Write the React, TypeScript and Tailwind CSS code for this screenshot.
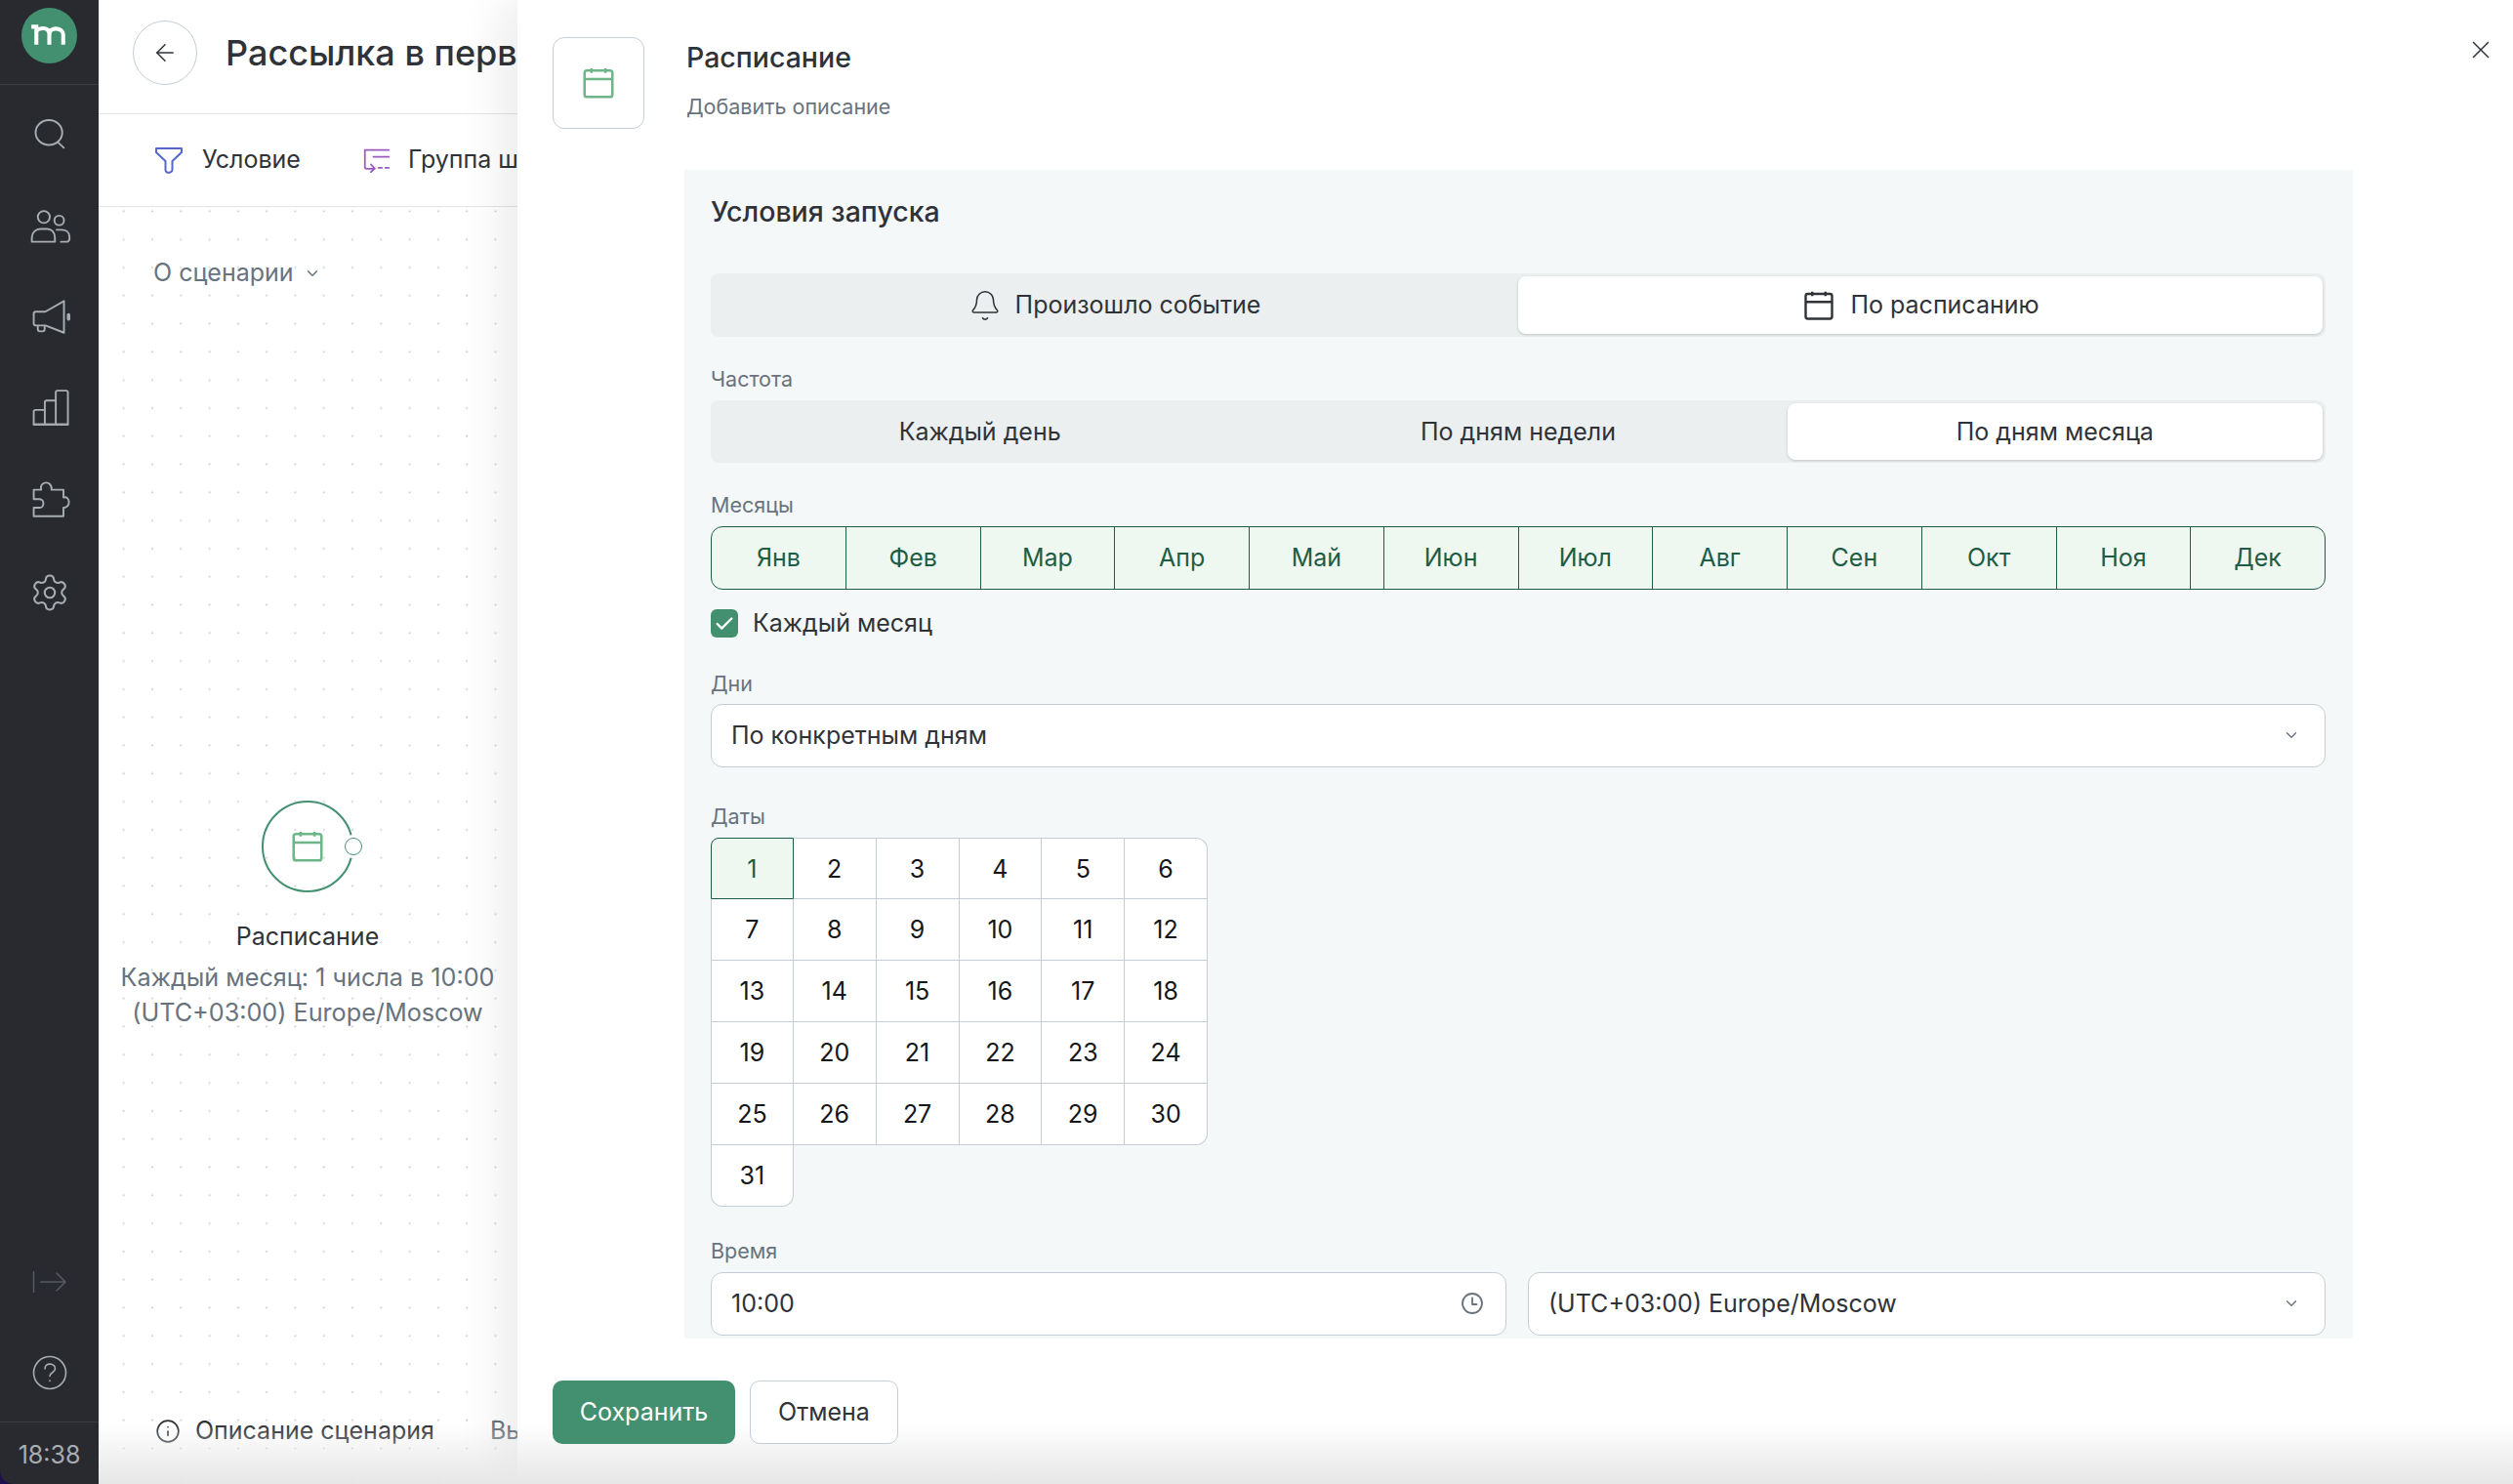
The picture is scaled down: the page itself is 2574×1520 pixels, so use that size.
import { ArrowLeft, Bell, ChevronDown, Check, Info, Settings, X } from 'lucide-react';

const months = ['Янв', 'Фев', 'Мар', 'Апр', 'Май', 'Июн', 'Июл', 'Авг', 'Сен', 'Окт', 'Ноя', 'Дек'];
const dates = Array.from({ length: 31 }, (_, i) => i + 1);

function CalendarIcon({ className }: { className?: string }) {
  return (
    <svg viewBox="0 0 24 24" fill="none" stroke="currentColor" strokeWidth="1.6" className={className}>
      <rect x="3" y="4" width="18" height="17" rx="1.5" />
      <path d="M3 9.500h18M7.500 2.500v3M16.500 2.500v3" />
    </svg>
  );
}

function SideIcon({ children }: { children: React.ReactNode }) {
  return (
    <svg viewBox="0 0 24 24" fill="none" stroke="#a8adb1" strokeWidth="1.1" strokeLinecap="round" strokeLinejoin="round" className="h-[42px] w-[42px] overflow-visible">
      {children}
    </svg>
  );
}

function Segment({ active, children }: { active?: boolean; children: React.ReactNode }) {
  return (
    <div className="flex flex-1 basis-0 p-[3px]">
      <div className={active ? '-ml-[3px] flex flex-1 items-center justify-center gap-[14px] rounded-[8px] bg-white pt-[1px] shadow-[0_1px_3px_rgba(0,0,0,0.18)]' : 'flex flex-1 items-center justify-center gap-[14px] pt-[1px]'}>
        {children}
      </div>
    </div>
  );
}

function Label({ children }: { children: React.ReactNode }) {
  return <div className="text-[21.5px] leading-[26px] text-[#68737d]">{children}</div>;
}

export default function App() {
  return (
    <div className="relative flex h-[1520px] w-[2574px] overflow-hidden bg-[#1e0f4e] text-[26px] text-[#2f3338] [font-family:Inter,sans-serif]">
      {/* left rail */}
      <aside className="flex h-full w-[101px] shrink-0 flex-col items-center rounded-bl-[14px] bg-[#282a30]">
        <div className="flex h-[87px] w-full justify-center border-b border-[#3c3e44] pt-[8px]">
          <svg viewBox="0 0 56 56" className="h-[57px] w-[57px]">
            <circle cx="28" cy="28" r="28" fill="#42906f" />
            <path d="M10 19h5v18M15 24c2-4 13-6 13 3v10M28 27c0-9 14-7 14 0v10" fill="none" stroke="#fff" strokeWidth="4" />
          </svg>
        </div>
        <nav className="mt-[29px] flex flex-col items-center gap-[52px]">
          <SideIcon>
            <ellipse cx="11.500" cy="11.300" rx="7.800" ry="7.300" />
            <path d="M17 17.200l3.200 3" />
          </SideIcon>
          <SideIcon>
            <circle cx="8.500" cy="7" r="3.500" />
            <path d="M1.500 21.500v-2.500c0-3 2.500-5 5-5h4c2.500 0 4.500 2 4.500 5v2.500z" />
            <circle cx="17.500" cy="9" r="2.800" />
            <path d="M16 14.500h3c2.500 0 4.500 1.500 4.500 4v1c0 1.200-.8 2-2 2h-3" />
          </SideIcon>
          <SideIcon>
            <path d="M2.600 10c0-.8.5-1.300 1.300-1.300h5.500L20.300 2.500v18.500L9.500 16.800H3.900c-.8 0-1.300-.5-1.300-1.300z" />
            <path d="M5 17v2c0 .8.5 1.200 1.200 1.200h1.600c.7 0 1.200-.4 1.200-1.200v-2" />
            <path d="M23 10.500v2.500" strokeWidth="2" />
          </SideIcon>
          <SideIcon>
            <path d="M2.600 21v-7.500c0-.6.4-1 1-1h5.500V21zM9.100 21V8c0-.6.4-1 1-1h5.400v14zM15.500 21V2.200c0-.6.4-1 1-1h5.100c.6 0 1 .4 1 1V21z" />
            <path d="M2.600 21h20" />
          </SideIcon>
          <SideIcon>
            <path d="M2.600 5.500H7c-1.500-5 6.500-6 6 0h7v4.500c4-1 4.500 6 0 6v5H2.600v-5H6c3 0 3-5 0-5H2.600z" />
          </SideIcon>
          <Settings color="#a8adb1" strokeWidth={1.2} className="h-[42px] w-[42px]" />
        </nav>
        <div className="mt-auto flex w-full flex-col items-center">
          <svg viewBox="0 0 36 24" fill="none" stroke="#565a60" strokeWidth="1.500" strokeLinecap="round" className="mb-[63px] h-[24px] w-[36px]">
            <path d="M1.500 1.500v21M9 12h25M25 3l9 9-9 9" />
          </svg>
          <svg viewBox="0 0 36 36" fill="none" stroke="#a8adb1" strokeWidth="1.600" strokeLinecap="round" className="mb-[32px] h-[36px] w-[36px]">
            <circle cx="18" cy="18" r="16.500" />
            <path d="M13 14c0-7 10.500-6 10.500 0 0 4-5.500 3.500-5.500 7.500M18 26v.5" />
          </svg>
          <div className="flex h-[64px] w-full items-center justify-center border-t border-[#3c3e44] pt-[4px] text-[25px] text-[#a8adb1]">18:38</div>
        </div>
      </aside>

      {/* scenario page under the drawer */}
      <main className="relative flex w-[429px] shrink-0 flex-col overflow-hidden bg-white">
        <header className="flex h-[117px] shrink-0 items-center gap-[29px] border-b border-[#dfe3e6] pb-[9px] pl-[35px]">
          <button className="flex h-[66px] w-[66px] items-center justify-center rounded-full border border-[#c5ccd3]">
            <ArrowLeft size={28} strokeWidth={1.3} color="#2f3338" />
          </button>
          <h1 className="whitespace-nowrap text-[36px] font-medium text-[#2f3338]">Рассылка в перв</h1>
        </header>
        <div className="flex h-[95px] shrink-0 items-center gap-[64px] border-b border-[#dfe3e6] pl-[56px] text-[25px]">
          <div className="flex items-center gap-[18px]">
            <svg viewBox="0 0 32 32" fill="none" stroke="#5566cc" strokeWidth="2" strokeLinejoin="round" className="h-[32px] w-[32px]">
              <path d="M3 4h26v4l-9.500 9v9c0 2-3 3.500-5.500 2.500-1-.4-1.500-1.200-1.500-2.500v-9L3 8z" />
            </svg>
            <span>Условие</span>
          </div>
          <div className="flex items-center gap-[18px] whitespace-nowrap">
            <svg viewBox="0 0 32 32" fill="none" stroke="#9a5cc0" strokeWidth="2" strokeLinecap="round" className="h-[28px] w-[28px]">
              <path d="M2 4h28M2 4v20c0 1.500 1 2 2 2h9M9 21l4.500 5L9 30M12 12h18M18 25h4M26 25h4" />
            </svg>
            <span>Группа ш</span>
          </div>
        </div>
        <div className="relative flex-1 bg-[radial-gradient(#cdd2d6_1px,transparent_1.2px)] bg-[size:29.3px_28.8px] bg-[position:11px_-10px]">
          <div className="flex items-center gap-[10px] pl-[56px] pt-[49px] text-[25px] text-[#68737d]">
            <span>О сценарии</span>
            <ChevronDown size={18} strokeWidth={2} />
          </div>
          <div className="absolute left-[167px] top-[608px] h-[94px] w-[94px] rounded-full border-2 border-[#42906f]">
            <div className="flex h-full items-center justify-center text-[#6eb589]">
              <CalendarIcon className="h-[38px] w-[38px]" />
            </div>
            <div className="absolute right-[-11px] top-[36px] h-[18px] w-[18px] rounded-full border border-[#42906f] bg-white ring-[3px] ring-white" />
          </div>
          <div className="absolute left-[14px] top-[729px] w-[400px] text-center">
            <div className="text-[25px] leading-[36px]">Расписание</div>
            <div className="mt-[6px] text-[25.2px] leading-[36px] text-[#68737d]">Каждый месяц: 1 числа в 10:00<br />(UTC+03:00) Europe/Moscow</div>
          </div>
          <div className="absolute left-[58px] top-[1235px] flex items-center gap-[15px] whitespace-nowrap text-[25px]">
            <Info size={26} strokeWidth={1.5} />
            <span>Описание сценария</span>
            <span className="ml-[42px] text-[#68737d]">Вы</span>
          </div>
        </div>
      </main>

      {/* drawer */}
      <section className="absolute bottom-0 left-[530px] right-0 top-0 bg-white shadow-[-20px_0_40px_rgba(0,0,0,0.07)]">
        <button className="absolute right-[18px] top-[36px] text-[#2f3338]">
          <X size={30} strokeWidth={1.2} />
        </button>
        <div className="flex h-[174px] gap-[43px] pl-[36px] pt-[38px]">
          <div className="flex h-[94px] w-[94px] items-center justify-center rounded-[12px] border border-[#c5ccd3] text-[#6eb589]">
            <CalendarIcon className="h-[38px] w-[38px]" />
          </div>
          <div>
            <div className="text-[28.500px] font-medium leading-[42px]">Расписание</div>
            <div className="mt-[14px] text-[21.5px] leading-[30px] text-[#68737d]">Добавить описание</div>
          </div>
        </div>

        <div className="ml-[171px] h-[1197px] w-[1709px] overflow-hidden bg-[#f4f8f9] pl-[27px] pr-[28px]">
          <h2 className="pt-[25px] text-[28.500px] font-medium leading-[36px]">Условия запуска</h2>

          <div className="mt-[45px] flex h-[65px] rounded-[8px] bg-[#ebeff0] text-[25px]">
            <Segment>
              <Bell size={34} strokeWidth={1.1} />
              <span>Произошло событие</span>
            </Segment>
            <Segment active>
              <CalendarIcon className="h-[36px] w-[36px]" />
              <span>По расписанию</span>
            </Segment>
          </div>

          <div className="mt-[30px]"><Label>Частота</Label></div>
          <div className="mt-[9px] flex h-[64px] rounded-[8px] bg-[#ebeff0] text-[25px]">
            <Segment>Каждый день</Segment>
            <Segment>По дням недели</Segment>
            <Segment active>По дням месяца</Segment>
          </div>

          <div className="mt-[30px]"><Label>Месяцы</Label></div>
          <div className="mt-[9px] flex h-[65px] overflow-hidden rounded-[12px] border-[1.5px] border-[#1f5c45] bg-[#eef8f1] text-[25px] text-[#1f5c45]">
            {months.map((m, i) => (
              <div key={m} className={i === 0 ? 'flex flex-1 items-center justify-center' : 'flex flex-1 items-center justify-center border-l-[1.5px] border-[#1f5c45]'}>
                {m}
              </div>
            ))}
          </div>

          <div className="mt-[16px] flex items-center gap-[15px] text-[25px]">
            <div className="flex h-[29px] w-[28px] items-center justify-center rounded-[6px] bg-[#42906f]">
              <Check size={22} strokeWidth={2.6} color="#fff" />
            </div>
            <span>Каждый месяц</span>
          </div>

          <div className="mt-[29px]"><Label>Дни</Label></div>
          <div className="mt-[8px] flex h-[65px] items-center justify-between rounded-[12px] border-[1.5px] border-[#c5ccd3] bg-white pl-[20px] pr-[25px] text-[25px]">
            <span className="pt-[2px]">По конкретным дням</span>
            <ChevronDown size={18} strokeWidth={1.8} color="#68737d" />
          </div>

          <div className="mt-[37px]"><Label>Даты</Label></div>
          <div className="mt-[9px] grid w-[509px] grid-cols-6 auto-rows-[63px] text-[25px] text-[#14171a]">
            {dates.map((d) => {
              const cell = d === 1
                ? 'flex items-center justify-center rounded-tl-[8px] border-[1.5px] border-[#1f5c45] bg-[#eef8f1] text-[#1f5c45]'
                : d === 31
                  ? 'flex items-center justify-center rounded-b-[12px] border-[1.5px] border-t-0 border-[#c5ccd3] bg-white'
                  : d === 30
                    ? 'flex items-center justify-center rounded-br-[12px] border-b-[1.5px] border-r-[1.5px] border-[#c5ccd3] bg-white'
                    : d === 6
                      ? 'flex items-center justify-center rounded-tr-[12px] border-b-[1.5px] border-r-[1.5px] border-t-[1.5px] border-[#c5ccd3] bg-white'
                      : d < 6
                        ? 'flex items-center justify-center border-b-[1.5px] border-r-[1.5px] border-t-[1.5px] border-[#c5ccd3] bg-white'
                        : d % 6 === 1
                          ? 'flex items-center justify-center border-b-[1.5px] border-l-[1.5px] border-r-[1.5px] border-[#c5ccd3] bg-white'
                          : 'flex items-center justify-center border-b-[1.5px] border-r-[1.5px] border-[#c5ccd3] bg-white';
              return <div key={d} className={cell}><span className="pt-[3px]">{d}</span></div>;
            })}
          </div>

          <div className="mt-[32px]"><Label>Время</Label></div>
          <div className="mt-[9px] flex gap-[22px] text-[25px]">
            <div className="flex h-[65px] w-[815px] items-center justify-between rounded-[12px] border-[1.5px] border-[#c5ccd3] bg-white pl-[20px] pr-[22px]">
              <span className="pt-[1px]">10:00</span>
              <svg viewBox="0 0 24 24" fill="none" stroke="#68737d" strokeWidth="1.8" strokeLinecap="round" strokeLinejoin="round" className="h-[24px] w-[24px]">
                <circle cx="12" cy="12" r="10" />
                <path d="M12 6.500V13h4.500" />
              </svg>
            </div>
            <div className="flex h-[65px] flex-1 items-center justify-between rounded-[12px] border-[1.5px] border-[#c5ccd3] bg-white pl-[20px] pr-[25px]">
              <span className="pt-[1px]">(UTC+03:00) Europe/Moscow</span>
              <ChevronDown size={18} strokeWidth={1.8} color="#68737d" />
            </div>
          </div>
        </div>

        <div className="relative z-10 ml-[36px] mt-[43px] flex gap-[15px] text-[25px]">
          <button className="h-[65px] w-[187px] rounded-[10px] bg-[#42906f] text-white">Сохранить</button>
          <button className="h-[65px] w-[152px] rounded-[10px] border-[1.5px] border-[#c5ccd3] bg-white">Отмена</button>
        </div>
      </section>

      {/* bottom fade of the window */}
      <div className="pointer-events-none absolute bottom-0 left-[101px] right-0 h-[62px] bg-gradient-to-b from-transparent to-[#e6e6e6]" />
    </div>
  );
}
